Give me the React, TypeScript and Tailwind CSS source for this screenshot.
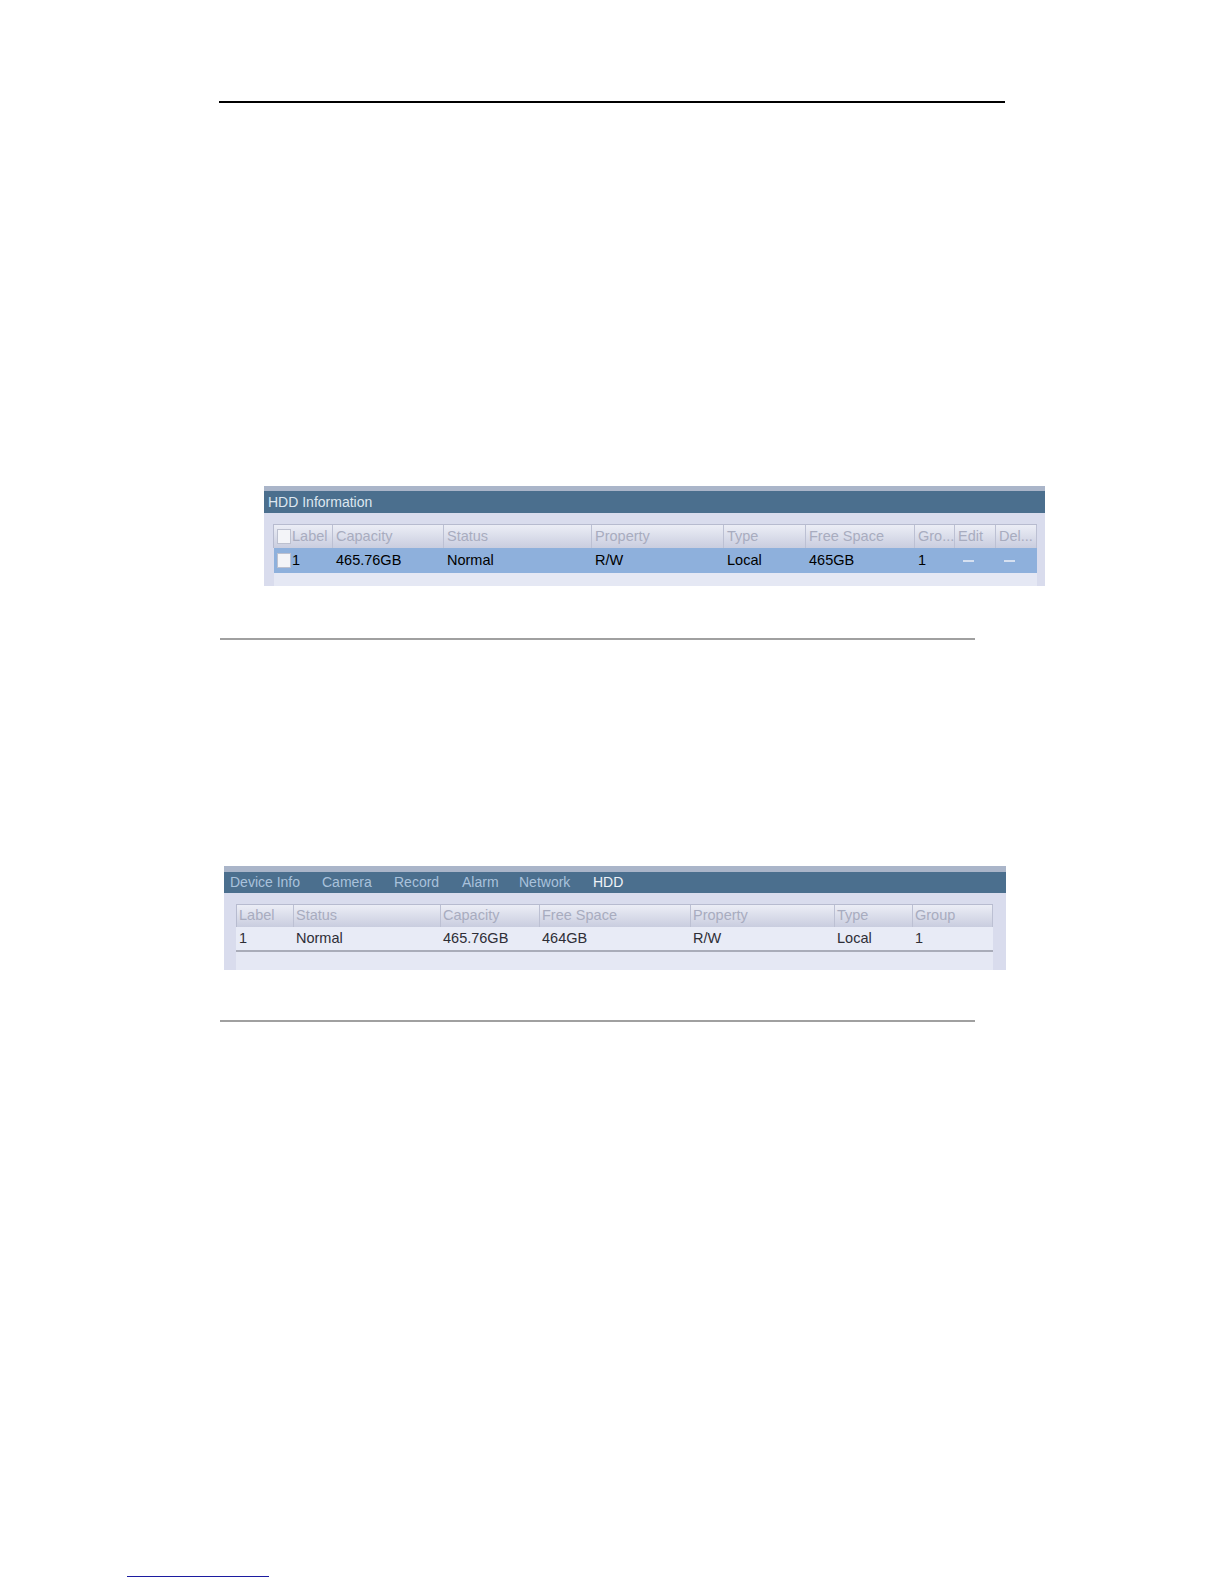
const hddColumns = [
  { label: "Label", width: 59 },
  { label: "Capacity", width: 111 },
  { label: "Status", width: 148 },
  { label: "Property", width: 132 },
  { label: "Type", width: 82 },
  { label: "Free Space", width: 109 },
  { label: "Gro...", width: 40 },
  { label: "Edit", width: 41 },
  { label: "Del...", width: 41 },
];

const hddRow = ["1", "465.76GB", "Normal", "R/W", "Local", "465GB", "1", "-", "-"];

const statusColumns = [
  { label: "Label", width: 57 },
  { label: "Status", width: 147 },
  { label: "Capacity", width: 99 },
  { label: "Free Space", width: 151 },
  { label: "Property", width: 144 },
  { label: "Type", width: 78 },
  { label: "Group", width: 80 },
];

const statusRow = ["1", "Normal", "465.76GB", "464GB", "R/W", "Local", "1"];

// widths are the distance from one tab's text to the next
const tabs = [
  { name: "Device Info", className: "w-[92px] text-[#a9c2dc]" },
  { name: "Camera", className: "w-[72px] text-[#a9c2dc]" },
  { name: "Record", className: "w-[68px] text-[#a9c2dc]" },
  { name: "Alarm", className: "w-[57px] text-[#a9c2dc]" },
  { name: "Network", className: "w-[74px] text-[#a9c2dc]" },
  { name: "HDD", className: "text-[#eef3f8]" },
];

function Checkbox() {
  return <span className="ml-[3px] mr-[1px] h-[15px] w-[14px] shrink-0 border border-[#bcc0cf] bg-[#f3f4f8]" />;
}

function HddInformationPanel() {
  return (
    <div className="ml-[264px] mt-[383px] flex h-[100px] w-[781px] shrink-0 flex-col bg-[#d9dced]">
      <div className="h-[5px] shrink-0 bg-[#aab5c9]" />
      <div className="h-[22px] shrink-0 bg-[#4b6f8e] pl-[4px] text-[14px] leading-[22px] text-[#dde7f0]">
        HDD Information
      </div>

      <div className="flex-1 pl-[9px] pt-[11px]">
        <div className="flex h-[24px] w-[764px] border-l border-t border-[#b7bbcf] bg-gradient-to-b from-[#eceef6] to-[#c9cddf]">
          {hddColumns.map((column, columnIndex) => (
            <div
              key={column.label}
              style={{ width: column.width }}
              className={`flex shrink-0 items-center overflow-hidden whitespace-nowrap border-r border-[#bcc0d3] text-[14.5px] text-[#a8acbf] ${
                columnIndex === 0 ? "" : "pl-[3px]"
              }`}
            >
              {columnIndex === 0 && <Checkbox />}
              {column.label}
            </div>
          ))}
        </div>

        <div className="ml-[1px] flex h-[25px] w-[763px] bg-[#8eb0dc]">
          {hddRow.map((value, valueIndex) => (
            <div
              key={valueIndex}
              style={{ width: hddColumns[valueIndex].width }}
              className={`flex shrink-0 items-center whitespace-nowrap text-[14.5px] text-black ${
                valueIndex === 0 ? "" : "pl-[3px]"
              }`}
            >
              {valueIndex === 0 && <Checkbox />}
              {value === "-" ? <span className="ml-[5px] h-[2px] w-[11px] bg-[#d6e0f0]" /> : value}
            </div>
          ))}
        </div>

        <div className="ml-[1px] h-[13px] w-[763px] bg-[#e5e8f4]" />
      </div>
    </div>
  );
}

function HddStatusPanel() {
  return (
    <div className="ml-[224px] mt-[226px] flex h-[104px] w-[782px] shrink-0 flex-col bg-[#d9dced]">
      <div className="h-[6px] shrink-0 bg-[#aab5c9]" />
      <div className="flex h-[21px] shrink-0 bg-[#4b6f8e] pl-[6px] text-[14px] leading-[21px]">
        {tabs.map((tab) => (
          <span key={tab.name} className={`shrink-0 ${tab.className}`}>
            {tab.name}
          </span>
        ))}
      </div>

      <div className="flex-1 pl-[12px] pt-[11px]">
        <div className="flex h-[23px] w-[757px] border-l border-t border-[#b7bbcf] bg-gradient-to-b from-[#eceef6] to-[#c9cddf]">
          {statusColumns.map((column) => (
            <div
              key={column.label}
              style={{ width: column.width }}
              className="flex shrink-0 items-center whitespace-nowrap border-r border-[#bcc0d3] pl-[2px] text-[14.5px] text-[#a8acbf]"
            >
              {column.label}
            </div>
          ))}
        </div>

        <div className="flex h-[25px] w-[757px] border-b-2 border-[#a9acb9] bg-[#e8ebf6]">
          {statusRow.map((value, valueIndex) => (
            <div
              key={valueIndex}
              style={{ width: statusColumns[valueIndex].width }}
              className="flex shrink-0 items-center whitespace-nowrap pl-[3px] text-[14.5px] text-[#2e2e36]"
            >
              {value}
            </div>
          ))}
        </div>

        <div className="h-[18px] w-[757px] bg-[#e5e8f4]" />
      </div>
    </div>
  );
}

export default function App() {
  return (
    <div className="flex h-[1584px] w-[1224px] flex-col overflow-hidden bg-white font-['Liberation_Sans',Arial,sans-serif]">
      <div className="ml-[219px] mt-[101px] h-[2px] w-[786px] shrink-0 bg-black" />

      <HddInformationPanel />

      <div className="ml-[220px] mt-[52px] h-[2px] w-[755px] shrink-0 bg-[#a0a0a0]" />

      <HddStatusPanel />

      <div className="ml-[220px] mt-[50px] h-[2px] w-[755px] shrink-0 bg-[#a0a0a0]" />

      <div className="ml-[127px] mt-[554px] h-[1px] w-[142px] shrink-0 bg-[#1c1ca0]" />
    </div>
  );
}
